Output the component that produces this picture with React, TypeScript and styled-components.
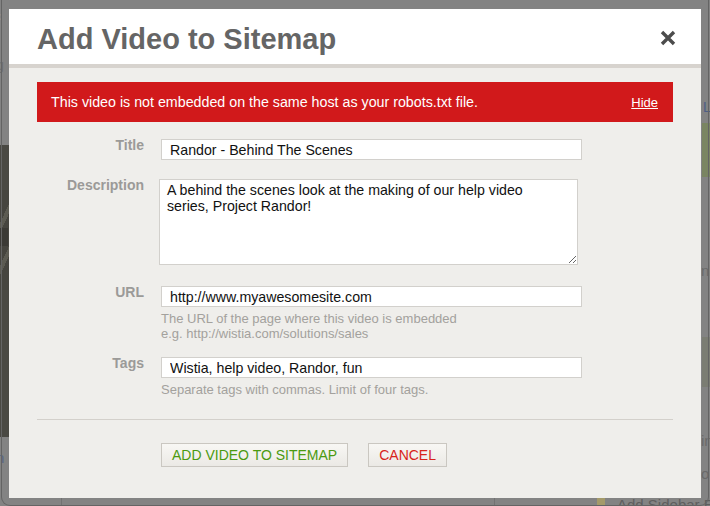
import React from "react";
import styled, { createGlobalStyle } from "styled-components";

const Global = createGlobalStyle`
  html, body {
    margin: 0;
    padding: 0;
    width: 710px;
    height: 506px;
    overflow: hidden;
    background: #838383;
  }
  * { box-sizing: border-box; }
`;

const Screen = styled.div`
  position: relative;
  width: 710px;
  height: 506px;
  overflow: hidden;
  background: #838383;
  padding: 0 1px;
  font-family: "Liberation Sans", Arial, Helvetica, sans-serif;
`;

/* dimmed page behind the modal */
const Backdrop = styled.div`
  position: absolute;
  inset: 0;
  z-index: 0;
  pointer-events: none;
`;

const Patch = styled.div<{ $x: number; $y: number; $w: number; $h: number; $c: string }>`
  position: absolute;
  left: ${(p) => p.$x}px;
  top: ${(p) => p.$y}px;
  width: ${(p) => p.$w}px;
  height: ${(p) => p.$h}px;
  background: ${(p) => p.$c};
`;

const StripedPatch = styled(Patch)`
  background: repeating-linear-gradient(
    115deg,
    #46453f 0px,
    #46453f 14px,
    #5c5b52 14px,
    #5c5b52 18px
  );
`;

const BackText = styled.span<{ $x: number; $y: number; $size: number; $c: string; $bold?: boolean }>`
  position: absolute;
  left: ${(p) => p.$x}px;
  top: ${(p) => p.$y}px;
  font-size: ${(p) => p.$size}px;
  line-height: 1;
  color: ${(p) => p.$c};
  font-weight: ${(p) => (p.$bold ? 700 : 400)};
  white-space: nowrap;
`;

const VLine = styled.div<{ $x: number }>`
  position: absolute;
  left: ${(p) => p.$x}px;
  top: 496px;
  width: 1px;
  height: 10px;
  background: #727272;
`;

const Frame = styled.div`
  position: relative;
  z-index: 1;
  height: 506px;
  border: 1px solid #646464;
  border-top: 0;
  border-radius: 0 0 9px 9px;
  padding: 9px 7px 7px;
`;

const Modal = styled.div`
  width: 692px;
  height: 489px;
  display: flex;
  flex-direction: column;
  background: #efeeeb;
`;

const Header = styled.header`
  height: 59px;
  flex: none;
  background: #ffffff;
  border-bottom: 4px solid #d7d3ce;
  display: flex;
  justify-content: space-between;
  align-items: flex-start;
  padding: 16px 25px 0 28px;
`;

const Title = styled.h1`
  margin: 0;
  font-size: 29px;
  line-height: 29px;
  font-weight: 700;
  color: #656565;
`;

const CloseButton = styled.button`
  margin-top: 5px;
  width: 16px;
  height: 16px;
  padding: 0;
  border: 0;
  background: none;
  display: flex;
  cursor: pointer;
`;

const Body = styled.div`
  flex: 1;
  padding: 14px 28px 30px;
  display: flex;
  flex-direction: column;
`;

const Alert = styled.div`
  height: 40px;
  flex: none;
  background: #d1191b;
  color: #ffffff;
  font-size: 14.25px;
  display: flex;
  align-items: center;
  justify-content: space-between;
  padding: 0 15px 0 14px;
  margin-bottom: 17px;
`;

const HideLink = styled.a`
  color: #ffffff;
  text-decoration: underline;
  font-size: 13px;
  cursor: pointer;
`;

const FieldRow = styled.div<{ $gap: number }>`
  display: grid;
  grid-template-columns: 107px 421px;
  column-gap: 17px;
  margin-bottom: ${(p) => p.$gap}px;
`;

const Label = styled.label`
  text-align: right;
  font-size: 14px;
  line-height: 12px;
  font-weight: 700;
  color: #9b9a98;
`;

const Field = styled.div`
  display: flex;
  flex-direction: column;
`;

const TextInput = styled.input`
  width: 421px;
  height: 21px;
  border: 1px solid #d2d0cc;
  background: #ffffff;
  padding: 0 8px;
  font-family: inherit;
  font-size: 14.2px;
  color: #111111;
  outline: none;
`;

const TextArea = styled.textarea`
  width: 419px;
  height: 86px;
  margin-left: -2px;
  border: 1px solid #d2d0cc;
  background: #ffffff;
  padding: 2px 22px 2px 7px;
  font-family: inherit;
  font-size: 14.2px;
  line-height: 16px;
  color: #111111;
  outline: none;
  resize: both;
`;

const Help = styled.p`
  margin: 4px 0 0;
  font-size: 13px;
  line-height: 15px;
  color: #a3a19d;
`;

const Divider = styled.hr`
  margin: 22px 0 0;
  border: 0;
  height: 1px;
  background: #d3d0cb;
`;

const Actions = styled.div`
  display: flex;
  gap: 20px;
  margin-top: 23px;
  padding-left: 124px;
`;

const Button = styled.button<{ $tone: "go" | "stop" }>`
  height: 24px;
  padding: 0 10px;
  border: 1px solid #cac7c1;
  background: linear-gradient(#f8f7f4, #ebe9e5);
  font-family: inherit;
  font-size: 14px;
  text-transform: uppercase;
  color: ${(p) => (p.$tone === "go" ? "#4b9a10" : "#d8231b")};
  cursor: pointer;
`;

const CloseIcon = () => (
  <svg width="16" height="16" viewBox="0 0 16 16">
    <path d="M2 2 L14 14 M14 2 L2 14" stroke="#4c4c4c" strokeWidth="3.4" strokeLinecap="butt" />
  </svg>
);

export default function App() {
  return (
    <>
      <Global />
      <Screen>
        <Backdrop>
          <BackText $x={-14} $y={-36} $size={40} $c="#4f4f4f" $bold>
            WISTIA
          </BackText>
          <BackText $x={-6} $y={9} $size={14} $c="#9a9a9a">c</BackText>
          <BackText $x={-4} $y={58} $size={14} $c="#6d6d6d">g</BackText>
          <Patch $x={0} $y={145} $w={10} $h={292} $c="#4a4943" />
          <StripedPatch $x={0} $y={190} $w={10} $h={100} $c="#5c5b52" />
          <Patch $x={0} $y={228} $w={8} $h={18} $c="#3b3a35" />
          <BackText $x={-4} $y={450} $size={15} $c="#5a6685">n</BackText>
          <BackText $x={703} $y={100} $size={14} $c="#4e5e86">L</BackText>
          <Patch $x={702} $y={123} $w={8} $h={54} $c="#7a8562" />
          <BackText $x={701} $y={263} $size={15} $c="#6a6a6a">nb</BackText>
          <Patch $x={702} $y={337} $w={8} $h={50} $c="#7b7d73" />
          <BackText $x={701} $y={433} $size={15} $c="#6a6a6a">in</BackText>
          <BackText $x={701} $y={466} $size={15} $c="#6a6a6a">o</BackText>
          <Patch $x={597} $y={498} $w={8} $h={8} $c="#a49a6a" />
          <BackText $x={617} $y={497} $size={15} $c="#5e5e5e">Add Sidebar E</BackText>
          <VLine $x={61} />
          <VLine $x={494} />
        </Backdrop>
        <Frame>
          <Modal>
            <Header>
              <Title>Add Video to Sitemap</Title>
              <CloseButton aria-label="Close">
                <CloseIcon />
              </CloseButton>
            </Header>
            <Body>
              <Alert>
                <span>This video is not embedded on the same host as your robots.txt file.</span>
                <HideLink>Hide</HideLink>
              </Alert>
              <FieldRow $gap={19}>
                <Label>Title</Label>
                <Field>
                  <TextInput defaultValue="Randor - Behind The Scenes" />
                </Field>
              </FieldRow>
              <FieldRow $gap={21}>
                <Label>Description</Label>
                <Field>
                  <TextArea defaultValue="A behind the scenes look at the making of our help video series, Project Randor!" />
                </Field>
              </FieldRow>
              <FieldRow $gap={16}>
                <Label>URL</Label>
                <Field>
                  <TextInput defaultValue="http://www.myawesomesite.com" />
                  <Help>
                    The URL of the page where this video is embedded
                    <br />
                    e.g. http://wistia.com/solutions/sales
                  </Help>
                </Field>
              </FieldRow>
              <FieldRow $gap={0}>
                <Label>Tags</Label>
                <Field>
                  <TextInput defaultValue="Wistia, help video, Randor, fun" />
                  <Help>Separate tags with commas. Limit of four tags.</Help>
                </Field>
              </FieldRow>
              <Divider />
              <Actions>
                <Button $tone="go">Add Video to Sitemap</Button>
                <Button $tone="stop">Cancel</Button>
              </Actions>
            </Body>
          </Modal>
        </Frame>
      </Screen>
    </>
  );
}
